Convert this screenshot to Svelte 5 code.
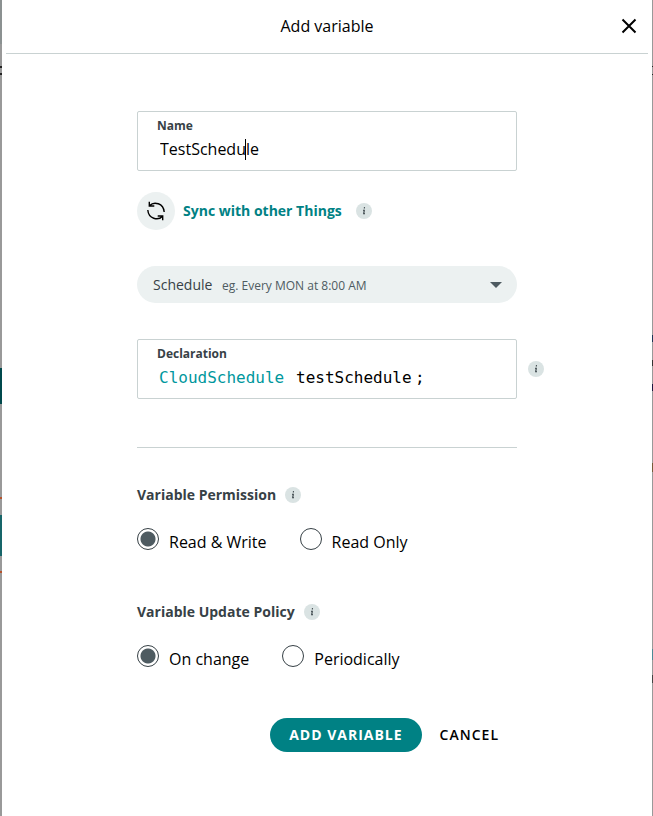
<script>
  let name = $state('TestSchedule');
  let declaration = $state('testSchedule');
  let type = $state('schedule');
  let permission = $state('rw');
  let policy = $state('change');

  const permissions = [
    { value: 'rw', label: 'Read & Write' },
    { value: 'ro', label: 'Read Only' },
  ];

  const policies = [
    { value: 'change', label: 'On change' },
    { value: 'periodic', label: 'Periodically' },
  ];
</script>

{#snippet info(label)}
  <button class="info" type="button" aria-label={label}>
    <svg width="16" height="16" viewBox="0 0 16 16">
      <circle cx="8" cy="8" r="8" fill="#dae3e3" />
      <path d="M8.5 4.2l-.2 1.3M7 7.2h1.3l-.6 3.6h1.3" fill="none" stroke="#374146" stroke-width="1.1" />
    </svg>
  </button>
{/snippet}

<div class="backdrop">
  <form class="modal" onsubmit={(e) => e.preventDefault()}>
    <header>
      <h1>Add variable</h1>
      <button class="close" type="button" aria-label="Close">
        <svg width="16" height="16" viewBox="0 0 16 16">
          <path d="M1.5 1.5l13 13M14.5 1.5l-13 13" stroke="#000" stroke-width="2" />
        </svg>
      </button>
    </header>

    <div class="content">
      <div class="field">
        <label for="name">Name</label>
        <input id="name" type="text" bind:value={name} />
        <span class="caret"></span>
      </div>

      <div class="sync">
        <button class="sync-button" type="button">
          <span class="sync-icon">
            <svg width="20" height="20" viewBox="0 0 20 20" fill="none" stroke="#000" stroke-width="1.4">
              <path d="M3.6 4.5C8 0.2 17.5 2 18.2 11M3.3 0.8v4.2h5" />
              <path d="M16.4 15.5C12 19.8 2.5 18 1.8 9M16.7 19.2v-4.2h-5" />
            </svg>
          </span>
          Sync with other Things
        </button>
        {@render info('About sync')}
      </div>

      <div class="dropdown">
        <select aria-label="Variable type" bind:value={type}>
          <option value="schedule">Schedule</option>
        </select>
        <span class="hint">eg. Every MON at 8:00 AM</span>
        <svg class="arrow" width="12" height="6" viewBox="0 0 12 6">
          <path d="M0 0h12L6 6z" fill="#4e5b61" />
        </svg>
      </div>

      <div class="declaration">
        <div class="field">
          <label for="declaration">Declaration</label>
          <div class="code">
            <span class="type">CloudSchedule</span>
            <input id="declaration" type="text" bind:value={declaration} />
            <span>;</span>
          </div>
        </div>
        <div class="aside">{@render info('About declaration')}</div>
      </div>

      <hr />

      <fieldset>
        <legend>Variable Permission {@render info('About permission')}</legend>
        <div class="radios">
          {#each permissions as p}
            <label>
              <input type="radio" name="permission" value={p.value} bind:group={permission} />
              <span>{p.label}</span>
            </label>
          {/each}
        </div>
      </fieldset>

      <fieldset>
        <legend>Variable Update Policy {@render info('About update policy')}</legend>
        <div class="radios">
          {#each policies as p}
            <label>
              <input type="radio" name="policy" value={p.value} bind:group={policy} />
              <span>{p.label}</span>
            </label>
          {/each}
        </div>
      </fieldset>

      <footer>
        <button class="primary" type="submit">ADD VARIABLE</button>
        <button class="cancel" type="button">CANCEL</button>
      </footer>
    </div>
  </form>
</div>

<style>
  :global(body) {
    margin: 0;
  }

  .backdrop {
    box-sizing: border-box;
    min-height: 100vh;
    padding: 0 1px 0 2px;
    display: flex;
    font-family: 'Open Sans', 'Noto Sans', sans-serif;
    color: #000;
    /* slivers of the page left and right of the dialog */
    background:
      linear-gradient(
        #8b9191 44px, #999 44px 66px, #222 66px 68px, #999 68px 73px, #222 73px 75px, #999 75px 368px,
        #00494c 368px 404px, #999 404px 497px, #b5532d 497px 499px, #999 499px 515px,
        #176569 515px 556px, #999 556px 571px, #b5532d 571px 573px, #999 573px
      ) left / 2px 100% no-repeat,
      linear-gradient(
        #999 66px, #222 66px 67px, #999 67px 74px, #222 74px 75px, #999 75px 335px, #1d3557 335px 342px,
        #999 342px 360px, #333 360px 366px, #999 366px 384px, #1d1740 384px 391px, #999 391px 463px,
        #765b38 463px 472px, #999 472px 649px, #4c8995 649px 660px, #999 660px 675px, #444 675px 683px, #999 683px
      ) right / 1px 100% no-repeat;
  }

  .modal {
    flex: 1;
    border-radius: 4px 4px 0 0;
    background: #fff;
  }

  header {
    position: relative;
    display: flex;
    align-items: center;
    justify-content: center;
    height: 51px;
    margin: 0 4px;
    padding-bottom: 2px;
    border-bottom: 1px solid #c9d2d2;
  }

  h1 {
    margin: 0;
    font-size: 16px;
    font-weight: 400;
    line-height: 24px;
  }

  button {
    padding: 0;
    border: 0;
    background: none;
    font-family: inherit;
    cursor: pointer;
  }

  .close {
    position: absolute;
    right: 11px;
    display: flex;
  }

  .content {
    max-width: 380px;
    margin: 0 auto;
    padding: 57px 20px 64px;
  }

  .field {
    position: relative;
    box-sizing: border-box;
    width: 100%;
    height: 60px;
    padding: 6px 19px;
    border: 1px solid #c9d2d2;
    border-radius: 2px;
  }

  .field label {
    display: block;
    color: #374146;
    font-size: 12px;
    font-weight: 700;
    line-height: 16px;
  }

  .field input {
    box-sizing: border-box;
    width: 100%;
    height: 30px;
    padding: 0 3px;
    border: 0;
    outline: none;
    background: none;
    color: #000;
    font-family: inherit;
    font-size: 16px;
  }

  .caret {
    position: absolute;
    left: 107px;
    top: 27px;
    width: 1px;
    height: 21px;
    background: #000;
  }

  .sync {
    display: flex;
    align-items: center;
    gap: 14px;
    margin-top: 21px;
  }

  .sync-button {
    display: flex;
    align-items: center;
    gap: 8px;
    color: #008184;
    font-size: 14px;
    font-weight: 700;
    line-height: 18px;
  }

  .sync-icon {
    display: flex;
    align-items: center;
    justify-content: center;
    width: 38px;
    height: 38px;
    border-radius: 50%;
    background: #ecf1f1;
  }

  .info {
    display: flex;
  }

  .dropdown {
    position: relative;
    margin-top: 36px;
  }

  select {
    display: block;
    width: 100%;
    height: 37px;
    padding: 0 16px;
    border: 0;
    border-radius: 19px;
    appearance: none;
    background: #ecf1f1;
    color: #374146;
    font-family: inherit;
    font-size: 14px;
  }

  .hint {
    position: absolute;
    left: 85px;
    top: 12px;
    color: #4e5b61;
    font-size: 12px;
    line-height: 16px;
    pointer-events: none;
  }

  .arrow {
    position: absolute;
    right: 15px;
    top: 16px;
    pointer-events: none;
  }

  .declaration {
    position: relative;
    margin-top: 36px;
  }

  .aside {
    position: absolute;
    left: 100%;
    top: 22px;
    margin-left: 11px;
  }

  .code {
    display: flex;
    align-items: center;
    height: 30px;
    font-family: 'DejaVu Sans Mono', monospace;
    font-size: 16px;
  }

  .code .type {
    width: 137px;
    padding-left: 2px;
    color: #00979d;
  }

  .code input {
    width: 119px;
    padding: 0;
  }

  hr {
    margin: 48px 0 37px;
    border: 0;
    border-top: 1px solid #c9d2d2;
  }

  fieldset {
    margin: 0 0 37px;
    padding: 0;
    border: 0;
  }

  legend {
    display: flex;
    align-items: center;
    gap: 9px;
    padding: 0;
    color: #374146;
    font-size: 14px;
    font-weight: 700;
    line-height: 19px;
  }

  .radios {
    display: flex;
    gap: 33px;
    padding-top: 23px;
  }

  .radios label {
    display: flex;
    gap: 10px;
    height: 38px;
    font-size: 16px;
    line-height: 30px;
  }

  .radios input {
    appearance: none;
    box-sizing: border-box;
    width: 22px;
    height: 22px;
    margin: 1px 0 0;
    border: 1px solid #374146;
    border-radius: 50%;
  }

  .radios input:checked {
    background: radial-gradient(circle, #4e5b61 7px, #fff 8px);
  }

  footer {
    display: flex;
    justify-content: flex-end;
    align-items: center;
    gap: 18px;
    margin-top: -1px;
    padding-right: 18px;
  }

  footer button {
    height: 34px;
    font-size: 14px;
    line-height: 18px;
    letter-spacing: 1px;
  }

  .primary {
    padding: 0 19px;
    border-radius: 17px;
    background: #008184;
    color: #fff;
    font-weight: 700;
  }

  .cancel {
    color: #000;
    font-weight: 600;
  }
</style>
